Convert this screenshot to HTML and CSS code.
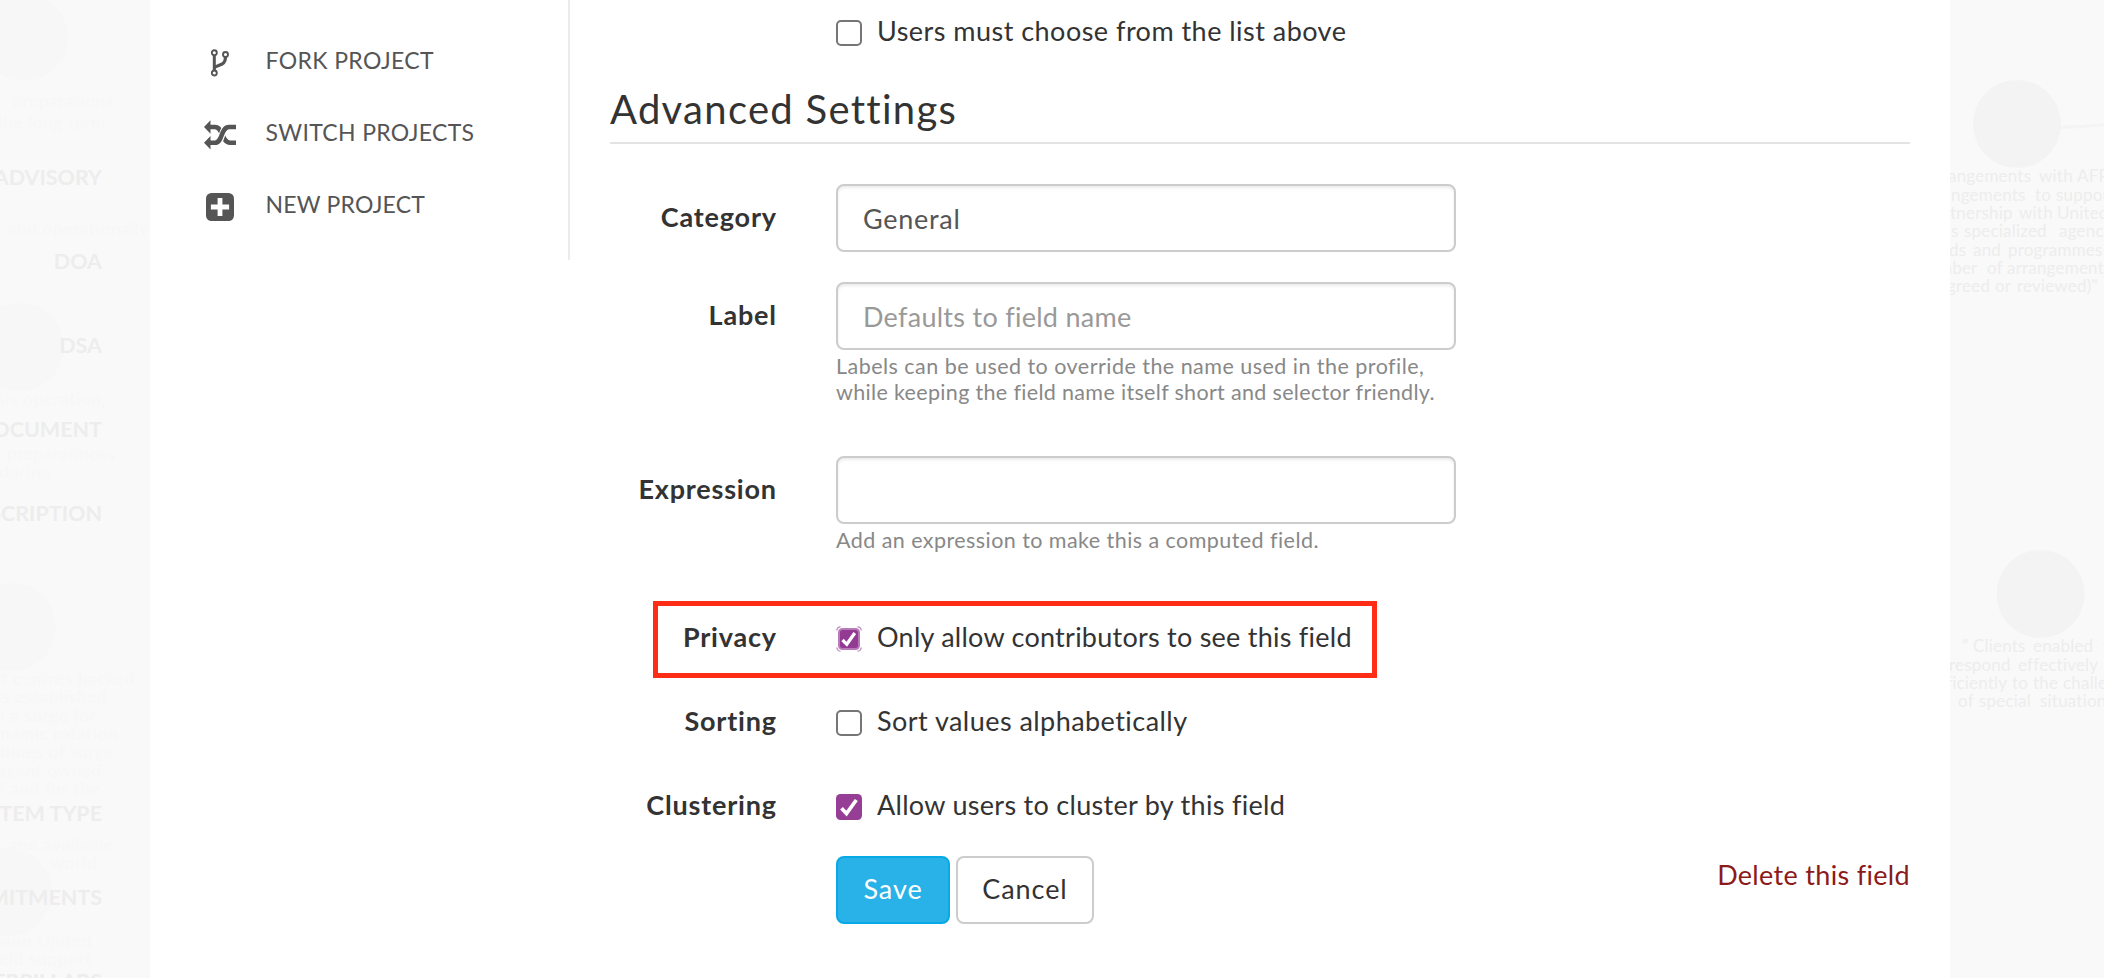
FILE: index.html
```html
<!DOCTYPE html>
<html lang="en">
<head>
<meta charset="utf-8">
<title>Field settings</title>
<link rel="stylesheet" href="styles.css">
</head>
<body>
<svg class="map" width="2104" height="978" viewBox="0 0 2104 978" aria-hidden="true">
  <g class="map-dim">
    <circle cx="24" cy="37" r="44"/><circle cx="20" cy="347" r="44"/><circle cx="12" cy="627" r="44"/><circle cx="8" cy="892" r="44"/>
  </g>
  <g class="map-ghost">
    <text x="114" y="107">preparations</text><text x="106" y="129">the long term</text>
    <text x="149" y="235">and operationally</text>
    <text x="106" y="405">crisis operation,</text><text x="115" y="460">preparedness</text><text x="51" y="478">during</text>
    <text x="135" y="685">assist centres backed</text><text x="107" y="703">is established</text><text x="97" y="722">in a surge for</text><text x="118" y="740">dynamic rotation</text>
    <text x="114" y="758">times of surge</text><text x="102" y="777">agent owned</text><text x="100" y="795">staff and for the</text>
    <text x="114" y="851">and available</text><text x="97" y="869">world</text><text x="92" y="947">sion United</text><text x="92" y="965">field support</text>
  </g>
  <g class="map-heading">
    <text x="102" y="184.500">ADVISORY</text><text x="102" y="268.500">DOA</text><text x="102" y="352.500">DSA</text><text x="102" y="436.500">DOCUMENT</text>
    <text x="102" y="520.500">DESCRIPTION</text><text x="102" y="820.500">ITEM TYPE</text><text x="102" y="904.500">COMMITMENTS</text><text x="102" y="988.500">TERPILLARS</text>
  </g>
  <path class="map-link" d="M2060 127.500Q2084 127 2104 124.500"/>
  <g class="map-node"><circle cx="2017" cy="124" r="44"/><circle cx="2040.500" cy="594" r="44"/></g>
  <g class="map-text">
    <text y="182"><tspan x="1948">angements</tspan><tspan x="2039">with</tspan><tspan x="2077">AFP</tspan></text>
    <text y="201"><tspan x="1951">ngements</tspan><tspan x="2035">to</tspan><tspan x="2056">support</tspan></text>
    <text y="219"><tspan x="1950">tnership</tspan><tspan x="2019">with</tspan><tspan x="2057">United</tspan></text>
    <text y="237"><tspan x="1951">s</tspan><tspan x="1964">specialized</tspan><tspan x="2059">agencies</tspan></text>
    <text y="256"><tspan x="1949">ds</tspan><tspan x="1973">and</tspan><tspan x="2008">programmes</tspan></text>
    <text y="274"><tspan x="1938">mber</tspan><tspan x="1987">of</tspan><tspan x="2007">arrangements</tspan></text>
    <text y="292"><tspan x="1947">greed</tspan><tspan x="1995">or</tspan><tspan x="2017">reviewed)"</tspan></text>
    <text y="652"><tspan x="1962">"</tspan><tspan x="1973">Clients</tspan><tspan x="2033">enabled</tspan><tspan x="2103">to</tspan></text>
    <text y="671"><tspan x="1949">respond</tspan><tspan x="2018">effectively</tspan></text>
    <text y="689"><tspan x="1946">ficiently</tspan><tspan x="2012">to</tspan><tspan x="2033">the</tspan><tspan x="2063">challenge</tspan></text>
    <text y="707"><tspan x="1958">of</tspan><tspan x="1979">special</tspan><tspan x="2040">situations</tspan></text>
  </g>
</svg>

<div class="panel">
  <nav class="sidebar">
    <a class="nav-item"><span class="nav-icon">
      <svg width="18" height="28" viewBox="0 0 18 28" fill="none" stroke="#555"><path d="M3.300 6v15" stroke-width="3"/><path d="M14.500 8c0 6-3 7-6.500 8.300-2.500.9-4 1.400-5 2.700" stroke-width="3.200"/><g fill="#fff" stroke-width="1.900"><circle cx="3.300" cy="3.700" r="2.500"/><circle cx="14.500" cy="5.500" r="2.500"/><circle cx="3.300" cy="24" r="2.500"/></g></svg>
    </span><span class="nav-fork">FORK PROJECT</span></a>
    <a class="nav-item"><span class="nav-icon">
      <svg width="32" height="30" viewBox="0 0 32 30"><g fill="none"><path d="M6 7h5c8 0 6.500 15.700 15 15.700h6" stroke="#555" stroke-width="4.600"/><path d="M12 22.700C19 22.700 16.500 7 25 7" stroke="#fff" stroke-width="6.600"/><path d="M6 22.700h5C19 22.700 16.500 7 25 7h7" stroke="#555" stroke-width="4.600"/></g><path d="M0 7 6.500.3v13.400zM0 22.700 6.500 16v13.400z" fill="#555"/></svg>
    </span><span class="nav-switch">SWITCH PROJECTS</span></a>
    <a class="nav-item"><span class="nav-icon">
      <svg width="28" height="28" viewBox="0 0 28 28"><rect width="28" height="28" rx="5.500" fill="#555"/><path d="M14 7.300v13.400M7.300 14h13.400" stroke="#fff" stroke-width="4.800" stroke-linecap="square"/></svg>
    </span><span class="nav-new">NEW PROJECT</span></a>
  </nav>

  <main class="content">
    <div class="row row-choose">
      <span></span>
      <div class="check"><span class="box"></span><span class="t-choose">Users must choose from the list above</span></div>
    </div>

    <h2 class="title">Advanced Settings</h2>

    <div class="row row-category">
      <label class="label tall">Category</label>
      <div><input class="field t-general" type="text" value="General"></div>
    </div>
    <div class="row row-label">
      <label class="label tall">Label</label>
      <div><input class="field t-default" type="text" placeholder="Defaults to field name">
        <p class="help"><span class="t-help1">Labels can be used to override the name used in the profile,</span><br><span class="t-help2">while keeping the field name itself short and selector friendly.</span></p></div>
    </div>
    <div class="row row-expression">
      <label class="label tall">Expression</label>
      <div><input class="field" type="text">
        <p class="help t-help3">Add an expression to make this a computed field.</p></div>
    </div>
    <div class="row row-privacy">
      <label class="label">Privacy</label>
      <div class="check">
        <svg class="tick" width="26" height="26" viewBox="0 0 26 26" fill="none"><path d="M.7 4.500Q1.200 1.200 4.500.7M21.500.7Q24.800 1.200 25.300 4.500M25.300 21.500Q24.800 24.800 21.500 25.300M4.500 25.300Q1.200 24.800.7 21.500" stroke="#c48fc4" stroke-width="1.300"/><rect x="3" y="3" width="20" height="20" rx="3.500" fill="#933b93" stroke="#b87ab8" stroke-width="2"/><path d="M6.500 14l4.300 4.300 8-11.300" stroke="#fff" stroke-width="3.300"/></svg>
        <span class="t-privacy">Only allow contributors to see this field</span></div>
      <span class="highlight"></span>
    </div>
    <div class="row row-option">
      <label class="label">Sorting</label>
      <div class="check"><span class="box"></span><span class="t-sort">Sort values alphabetically</span></div>
    </div>
    <div class="row row-option">
      <label class="label">Clustering</label>
      <div class="check">
        <svg class="tick" width="26" height="26" viewBox="0 0 26 26" fill="none"><rect width="26" height="26" rx="4.500" fill="#963d96"/><path d="M5.500 14.200l5 5.300L20.300 6" stroke="#fff" stroke-width="3.700"/></svg>
        <span class="t-cluster">Allow users to cluster by this field</span></div>
    </div>

    <div class="row row-actions">
      <span></span>
      <div class="actions">
        <button class="btn btn-save">Save</button>
        <button class="btn btn-cancel">Cancel</button>
        <a class="delete">Delete this field</a>
      </div>
    </div>
  </main>
</div>
</body>
</html>
```
FILE: styles.css
```css
* { box-sizing: border-box; }

body {
  margin: 0;
  height: 978px;
  overflow: hidden;
  position: relative;
  background: #f9f9f9;
  color: #333;
  font: 27px/32px Lato, "Open Sans", sans-serif;
}

/* Dimmed diagram behind the panel */
.map { position: absolute; left: 0; top: 0; }
.map-dim { fill: #f7f7f7; }
.map-ghost { fill: #f7f7f7; font-size: 17px; letter-spacing: .7px; text-anchor: end; }
.map-heading { fill: #ededed; font-size: 21.500px; font-weight: 700; text-anchor: end; }
.map-node { fill: #f3f3f3; }
.map-link { fill: none; stroke: #f4f4f4; stroke-width: 3; }
.map-text { fill: #ededed; font-size: 17px; letter-spacing: .2px; }

.panel {
  position: relative;
  display: flex;
  align-items: flex-start;
  width: 1800px;
  height: 978px;
  margin-left: 150px;
  background: #fff;
}

/* Sidebar */
.sidebar {
  width: 420px;
  height: 260px;
  padding: 24px 0 0 52px;
  border-right: 2px solid #ebebeb;
  font-size: 23px;
  color: #555;
}
.nav-item { display: flex; align-items: center; height: 72px; gap: 27.500px; }
.nav-icon { display: flex; justify-content: center; width: 36px; margin-top: 5px; }
.nav-fork { letter-spacing: .370px; }
.nav-switch { letter-spacing: .330px; }
.nav-new { letter-spacing: .180px; }

/* Form */
.content { flex: 1; padding: 15px 40px 0; }
.row {
  position: relative;
  display: grid;
  grid-template-columns: 166px 1fr;
  column-gap: 60px;
}
.row-choose { height: 65px; }
.title {
  margin: 0;
  padding-bottom: 4px;
  border-bottom: 2px solid #e3e3e3;
  font-size: 40px;
  font-weight: 400;
  line-height: 58px;
  letter-spacing: 1.290px;
}
.row-category { margin-top: 40px; }
.row-label { margin-top: 30px; }
.row-expression { margin-top: 51px; }
.row-privacy { margin-top: 68px; }
.row-option { margin-top: 52px; }
.row-actions { margin-top: 35px; }

.label { margin-right: -.800px; text-align: right; font-weight: 700; letter-spacing: .800px; }
.tall { line-height: 66px; }

.field {
  display: block;
  width: 620px;
  height: 68px;
  padding: 0 25px;
  border: 2px solid #ccc;
  border-radius: 8px;
  background: #fff;
  box-shadow: inset 0 2px 3px rgba(0, 0, 0, .08);
  color: #555;
  font: inherit;
  outline: none;
}
.field::placeholder { color: #999; opacity: 1; }
.help { margin: 3px 0 0; color: #888; font-size: 21.500px; line-height: 26px; white-space: nowrap; }

.check { display: flex; align-items: center; height: 32px; gap: 15px; white-space: nowrap; }
.box {
  width: 26px;
  height: 26px;
  margin-top: 4px;
  border: 2px solid #767676;
  border-radius: 5px;
}
.tick { margin-top: 4px; }
.highlight {
  position: absolute;
  left: 43px;
  top: -20px;
  width: 724px;
  height: 77px;
  border: 5px solid #ff2c16;
}

.t-choose { letter-spacing: .470px; }
.t-general { letter-spacing: .720px; }
.t-default { letter-spacing: .280px; }
.t-help1 { letter-spacing: .470px; }
.t-help2 { letter-spacing: .330px; }
.t-help3 { letter-spacing: .440px; }
.t-privacy { letter-spacing: .250px; }
.t-sort { letter-spacing: .450px; }
.t-cluster { letter-spacing: .300px; }

/* Actions */
.actions { display: flex; align-items: flex-start; gap: 6px; }
.btn {
  height: 68px;
  padding: 0 0 2px;
  border: 2px solid #ccc;
  border-radius: 8px;
  background: #fff;
  color: #333;
  font: inherit;
  letter-spacing: .930px;
}
.btn-save { width: 114px; border-color: #08a9e7; background: #29b2e8; color: #fff; }
.btn-cancel { width: 138px; }
.delete { margin: 3px 0 0 auto; color: #8c1a1a; letter-spacing: .320px; }
```
